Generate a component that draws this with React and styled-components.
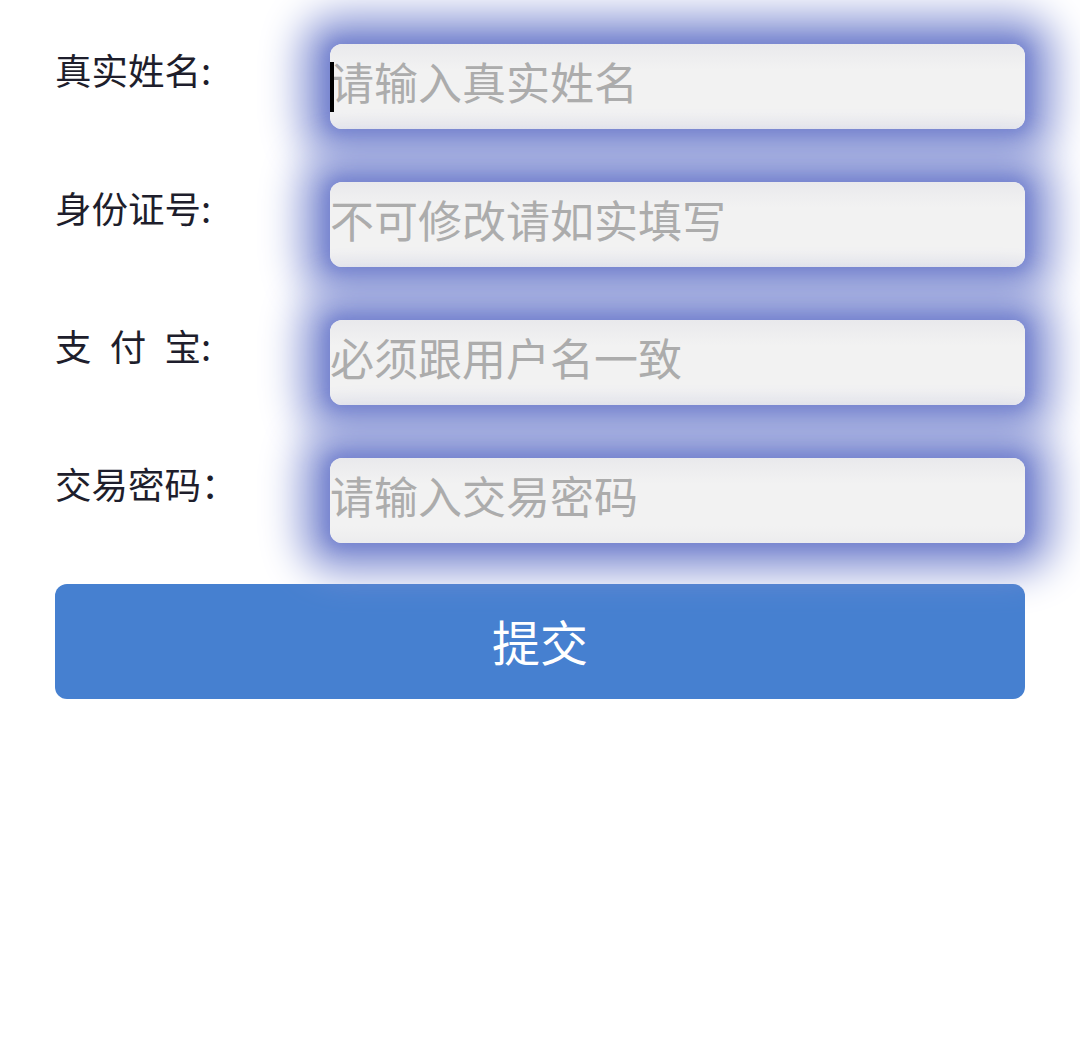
import styled, { createGlobalStyle } from "styled-components";

const GlobalStyle = createGlobalStyle`
  body {
    margin: 0;
    background: #fff;
    font-family: "Noto Sans CJK SC", "Noto Sans", sans-serif;
  }
`;

const Form = styled.form`
  width: 970px;
  padding: 44px 0 0 55px;
  display: flex;
  flex-direction: column;
`;

const Row = styled.div`
  display: flex;
  align-items: flex-start;
  margin-bottom: ${(p) => (p.$last ? "41px" : "53px")};
`;

const Label = styled.label`
  width: 275px;
  flex-shrink: 0;
  margin-top: 4px;
  font-size: 36.5px;
  line-height: 44px;
  color: #1e1e2c;
  white-space: pre;
`;

const Field = styled.div`
  position: relative;
  flex: 1;
`;

const Input = styled.input`
  display: block;
  box-sizing: border-box;
  width: 100%;
  height: 85px;
  padding: 0 0 12px 0;
  border: none;
  outline: none;
  border-radius: 12px;
  background: linear-gradient(#e9e9ec, #f2f2f2 30%, #f2f2f2 80%, #ececee);
  box-shadow: 0 0 16px 4px rgba(110, 124, 205, 0.85),
    0 0 40px 28px rgba(132, 145, 212, 1);
  font-family: inherit;
  font-size: 44px;
  color: #333;

  &::placeholder {
    color: #acacac;
  }
`;

const Caret = styled.span`
  position: absolute;
  left: 0;
  top: 18px;
  width: 4px;
  height: 50px;
  background: #000;
`;

const Submit = styled.button`
  height: 115px;
  border: none;
  border-radius: 12px;
  background: #4680d0;
  color: #fff;
  font-family: inherit;
  font-size: 48px;
  padding-bottom: 4px;
  cursor: pointer;
`;

const fields = [
  { label: "真实姓名:", placeholder: "请输入真实姓名", caret: true },
  { label: "身份证号:", placeholder: "不可修改请如实填写" },
  { label: "支\u2002付\u2002宝:", placeholder: "必须跟用户名一致" },
  { label: "交易密码：", placeholder: "请输入交易密码", type: "password" },
];

export default function App() {
  return (
    <>
      <GlobalStyle />
      <Form onSubmit={(e) => e.preventDefault()}>
        {fields.map((f, i) => (
          <Row key={f.label} $last={i === fields.length - 1}>
            <Label>{f.label}</Label>
            <Field>
              <Input type={f.type || "text"} placeholder={f.placeholder} />
              {f.caret && <Caret />}
            </Field>
          </Row>
        ))}
        <Submit type="submit">提交</Submit>
      </Form>
    </>
  );
}
